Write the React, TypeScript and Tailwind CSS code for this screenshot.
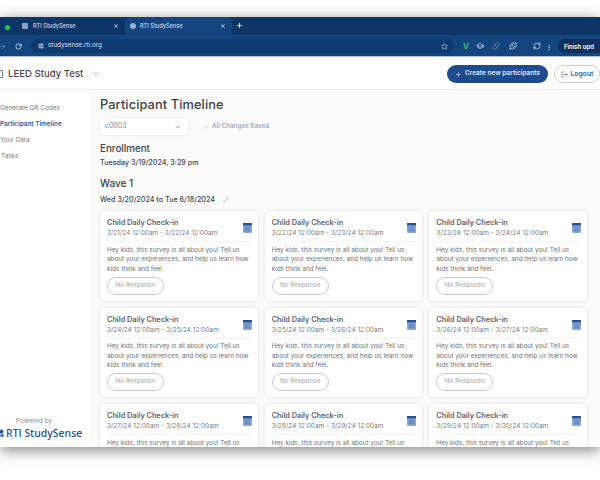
import { ArrowRight, Check, ChevronDown, GraduationCap, LogOut, Pencil, Pill, Plus, Puzzle, RefreshCw, RotateCw, SlidersHorizontal, Star, X } from 'lucide-react';

const cards = [
  ['3/21/24 12:00am - 3/22/24 12:00am'],
  ['3/22/24 12:00am - 3/23/24 12:00am'],
  ['3/23/24 12:00am - 3/24/24 12:00am'],
  ['3/24/24 12:00am - 3/25/24 12:00am'],
  ['3/25/24 12:00am - 3/26/24 12:00am'],
  ['3/26/24 12:00am - 3/27/24 12:00am'],
  ['3/27/24 12:00am - 3/28/24 12:00am'],
  ['3/28/24 12:00am - 3/29/24 12:00am'],
  ['3/29/24 12:00am - 3/30/24 12:00am'],
];

function SurveyIcon() {
  return (
    <svg width="9" height="10" viewBox="0 0 9 10" className="mt-[5px] shrink-0">
      <rect width="9" height="10" rx="1" fill="#86a7d6" />
      <rect width="9" height="2.4" fill="#28508f" />
      <path d="M1.5 4.2h6M1.5 6h6M1.5 7.8h6" stroke="#4a74b0" strokeWidth="0.7" />
    </svg>
  );
}

function Card({ date }: { date: string }) {
  return (
    <div className="h-[89.5px] shrink-0 rounded-[5px] bg-white pt-[7px] pr-[6px] pl-[7px] shadow-[0_0_4px_rgba(0,0,0,0.12)]">
      <div className="flex justify-between">
        <div>
          <div className="text-[7.3px] leading-[10px] font-semibold text-[#5c6066]">Child Daily Check-in</div>
          <div className="text-[6.5px] leading-[10px] whitespace-nowrap text-[#777b80]">{date}</div>
        </div>
        <SurveyIcon />
      </div>
      <div className="mt-[3px] border-t border-[#f3f3f3] pt-[3.5px] text-[6.4px] leading-[9.6px] text-[#6d7075]">
        Hey kids, this survey is all about you! Tell us about your experiences, and help us learn how kids think and feel.
      </div>
      <div className="mt-[2.5px] flex h-[18px] w-[57px] items-center justify-center rounded-full border border-[#c9c9c9] text-[6.4px] font-medium text-[#b3b3b3]">
        No Response
      </div>
    </div>
  );
}

export default function App() {
  return (
    <div className="flex h-[480px] w-[600px] flex-col overflow-hidden bg-white font-['Inter',sans-serif]">
      <div className="h-[17px] shrink-0 bg-white" />

      <div className="z-10 flex h-[430px] shrink-0 flex-col overflow-hidden shadow-[0_3px_14px_rgba(0,0,0,0.5)]">
        {/* Browser chrome */}
        <div className="flex h-[18px] shrink-0 items-end bg-[#0d3566] pl-[5px] text-[5.6px] font-medium text-[#cfdcf0]">
          <div className="mb-[5px] h-[5px] w-[5px] rounded-full bg-[#2fc84a]" />
          <div className="flex h-[18px] w-[110px] items-center pr-[1px] pl-[12px]">
            <span className="h-[6px] w-[6px] rounded-[1px] bg-[#8ea3c2]" />
            <span className="ml-[5px] flex-1">RTI StudySense</span>
            <X size={6} strokeWidth={3} />
          </div>
          <div className="ml-[5px] flex h-[18px] w-[107px] items-center rounded-t-[5px] bg-[#14457f] pr-[6px] pl-[5px]">
            <span className="h-[6px] w-[6px] rounded-full bg-[#9db0cb]" />
            <span className="ml-[4px] flex-1">RTI StudySense</span>
            <X size={6} strokeWidth={3} />
          </div>
          <Plus size={7} strokeWidth={3} className="mb-[6px] ml-[4px] text-white" />
        </div>
        <div className="flex h-[21px] shrink-0 items-center bg-[#14457f] pt-[1px] text-[#dce6f5]">
          <ArrowRight size={7} className="ml-[-1px] text-[#7f9fcb]" />
          <RotateCw size={7} strokeWidth={2.6} className="ml-[9px]" />
          <div className="ml-[9px] flex h-[14px] w-[122px] flex-1 items-center rounded-full bg-[#0f3a70] pl-[7px] text-[6.3px]">
            <SlidersHorizontal size={6} strokeWidth={3} />
            <span className="ml-[4px] flex-1">studysense.rti.org</span>
            <Star size={7} className="mr-[6px]" />
          </div>
          <div className="flex w-[146px] shrink-0 items-center pl-[9px]">
            <span className="text-[8px] font-bold text-[#3bc06a]">V</span>
            <GraduationCap size={8} className="ml-[7px] text-[#dfe7f3]" />
            <Pill size={8} className="ml-[8px] text-[#8e8f96]" />
            <Puzzle size={8} className="ml-[9px] text-white" />
            <RefreshCw size={8} className="ml-[16px]" />
            <span className="ml-[5px] text-[6px] font-bold">⋮</span>
            <span className="ml-[6px] flex h-[14px] flex-1 items-center overflow-hidden rounded-l-full bg-[#0d2f5c] pl-[6px] text-[6px] font-semibold whitespace-nowrap text-white">
              Finish upd
            </span>
          </div>
        </div>

        {/* App header */}
        <div className="flex h-[34px] shrink-0 items-center border-y border-[#ececec] border-t-[#a9c6ea] bg-white pt-[2px]">
          <span className="ml-[-2px] h-[8px] w-[5px] rounded-[1px] border border-[#777]" />
          <span className="ml-[5px] text-[9.6px] font-medium text-[#44474c]">LEED Study Test</span>
          <ChevronDown size={8} className="ml-[9px] text-[#777]" />
          <div className="ml-auto flex h-[18px] w-[101px] items-center justify-center gap-[3px] rounded-full bg-[#1e4a90] text-[6.5px] font-semibold whitespace-nowrap text-[#dfe8f5]">
            <Plus size={7} />
            Create new participants
          </div>
          <div className="ml-[6px] flex h-[18px] w-[46px] items-center justify-center gap-[3px] rounded-full border border-[#c9c9c9] text-[6.8px] font-semibold text-[#3c5f99]">
            <LogOut size={7} />
            Logout
          </div>
        </div>

        <div className="flex min-h-0 flex-1">
          {/* Sidebar */}
          <div className="flex w-[90px] shrink-0 flex-col bg-white text-[6.4px] text-[#77797d]">
            <div className="flex flex-col gap-[7px] pt-[14px] leading-[9px]">
              <span>Generate QR Codes</span>
              <span className="font-semibold text-[#2f5a9c]">Participant Timeline</span>
              <span>Your Data</span>
              <span className="pl-[1px]">Tasks</span>
            </div>
            <div className="mt-auto mb-[7px] flex flex-col items-center pr-[22px]">
              <span className="text-[6.5px] leading-[9px] text-[#8a8a8a]">Powered by</span>
              <div className="flex items-center self-start">
                <svg width="5" height="9" viewBox="0 0 5 9" className="mr-[1px] shrink-0">
                  <circle cx="1.5" cy="2.5" r="2" fill="#2a5594" />
                  <circle cx="2" cy="6.5" r="2" fill="#5e84bb" />
                </svg>
                <span className="font-['Open_Sans',sans-serif] text-[10.4px] leading-[14px] font-semibold whitespace-nowrap text-[#2a5594]">RTI StudySense</span>
              </div>
            </div>
          </div>

          {/* Main */}
          <div className="min-w-0 flex-1 overflow-hidden bg-[#fbfbfb] pr-[13px] pl-[10px]">
            <div className="mt-[5px] text-[12.8px] leading-[19px] font-medium tracking-[0.1px] text-[#3f4247]">Participant Timeline</div>
            <div className="mt-[4px] flex items-center">
              <div className="flex h-[17px] w-[88px] items-center justify-between rounded-[2px] bg-white pr-[6px] pl-[5px] text-[7px] text-[#888] shadow-[0_0_3px_rgba(0,0,0,0.1)]">
                c0003
                <ChevronDown size={8} />
              </div>
              <Check size={6} className="ml-[15px] text-[#9aa3ae]" />
              <span className="ml-[3px] text-[6.4px] font-medium text-[#8a9fc0]">All Changes Saved</span>
            </div>
            <div className="mt-[7px] text-[9.8px] leading-[14px] font-medium text-[#3f4247]">Enrollment</div>
            <div className="mt-[2px] text-[7.2px] leading-[10px] font-medium text-[#44474c]">Tuesday 3/19/2024, 3:29 pm</div>
            <div className="mt-[8px] text-[10px] leading-[14px] font-medium text-[#3f4247]">Wave 1</div>
            <div className="mt-[5px] flex items-center text-[7.2px] leading-[10px] font-medium text-[#44474c]">
              Wed 3/20/2024 to Tue 6/18/2024
              <Pencil size={6} className="ml-[8px] text-[#aaa]" />
            </div>
            <div className="mt-[6px] grid grid-cols-3 gap-[7px]">
              {cards.map(([date]) => (
                <Card key={date} date={date} />
              ))}
            </div>
          </div>
        </div>
      </div>

      <div className="flex-1 bg-white" />
    </div>
  );
}
